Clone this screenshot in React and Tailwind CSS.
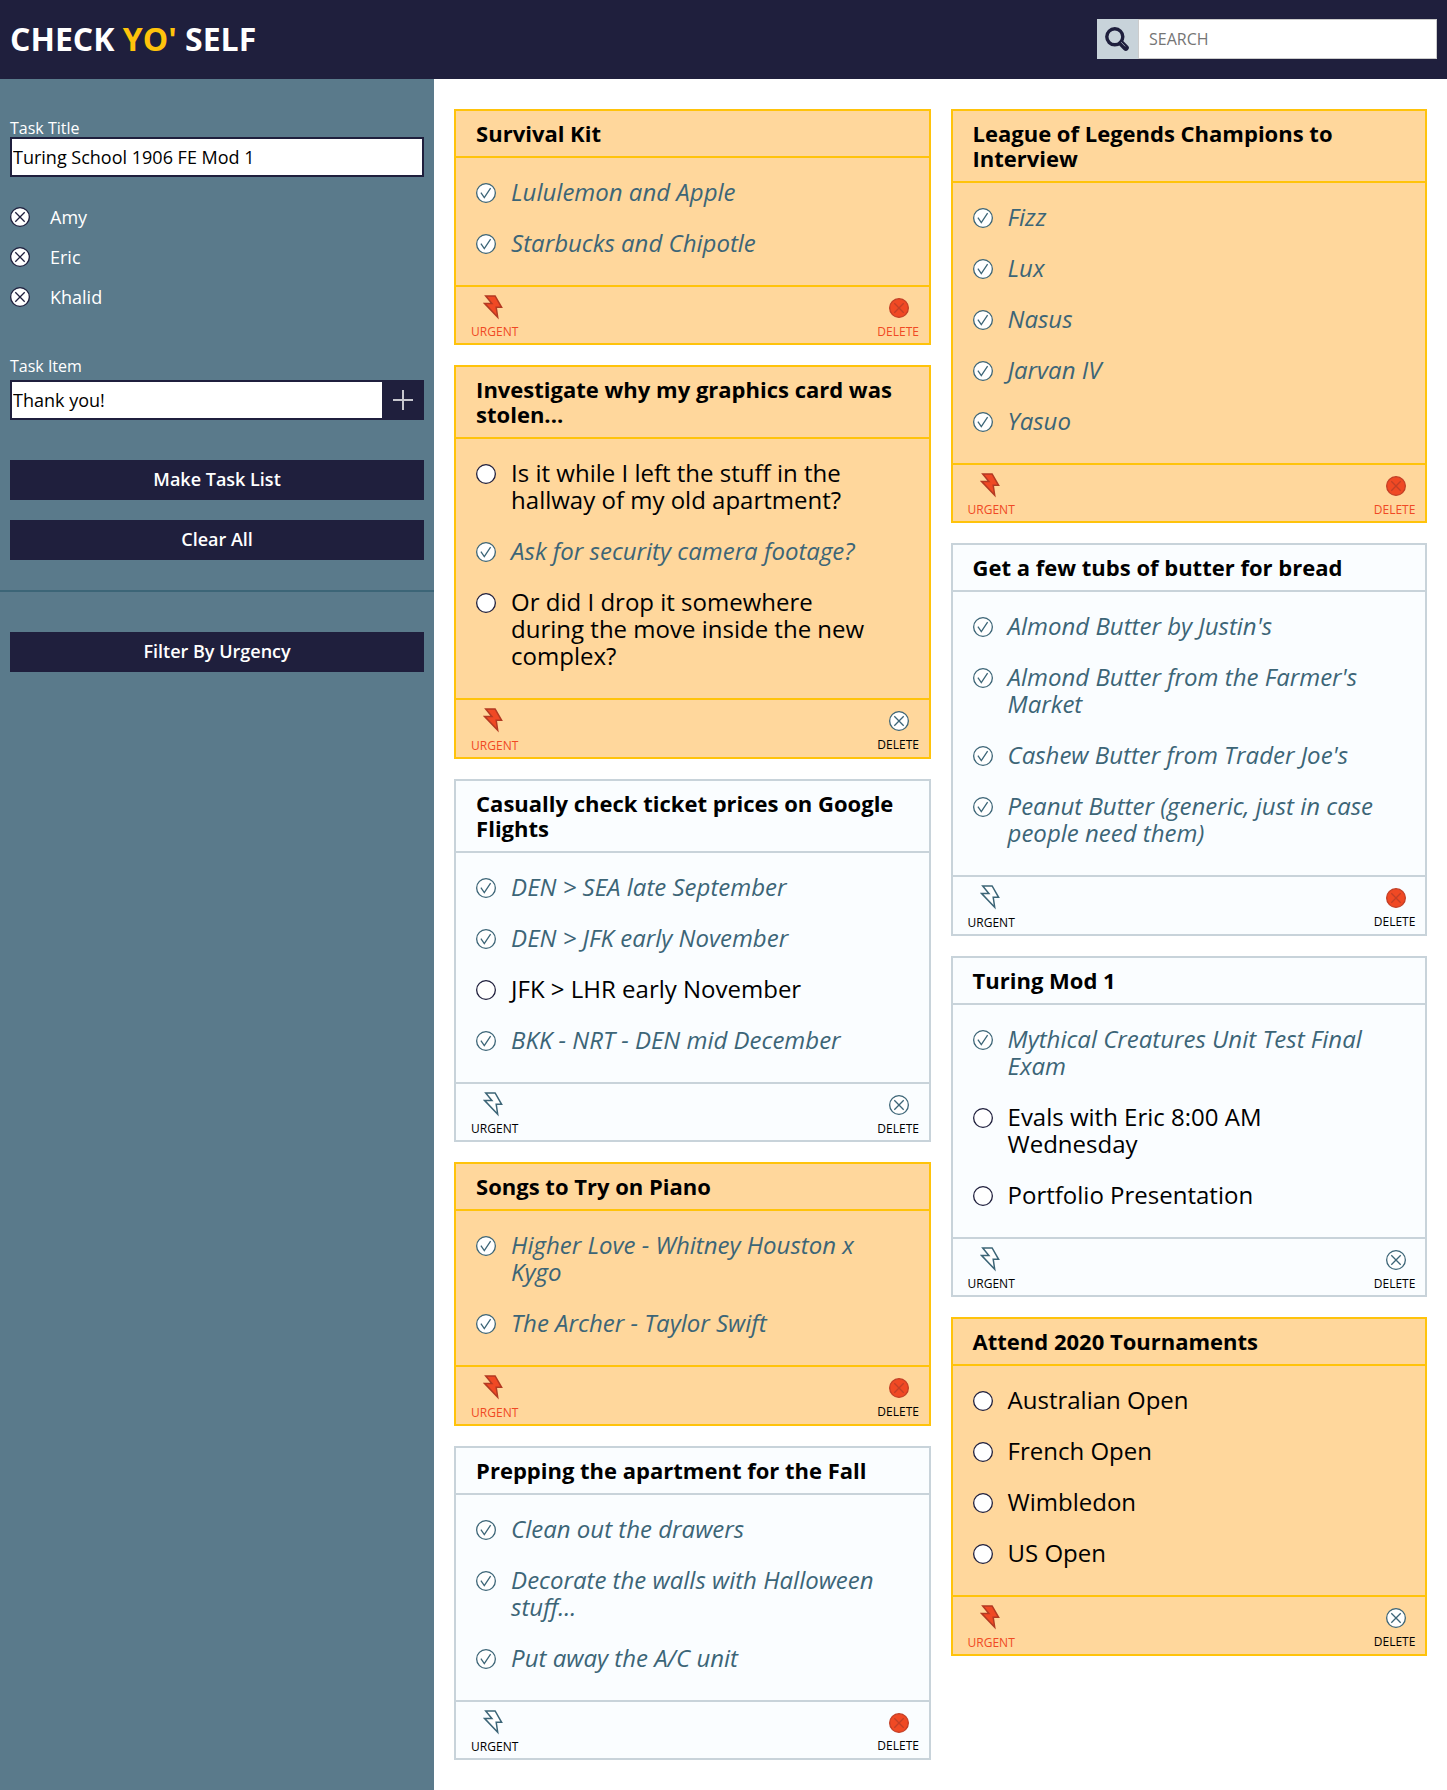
const cards = [
  [
    { title: "Survival Kit", urgent: true, del: "redtext", items: [[1, "Lululemon and Apple"], [1, "Starbucks and Chipotle"]] },
    {
      title: "Investigate why my graphics card was stolen...", urgent: true, del: "off",
      items: [
        [0, "Is it while I left the stuff in the hallway of my old apartment?"],
        [1, "Ask for security camera footage?"],
        [0, "Or did I drop it somewhere during the move inside the new complex?"],
      ],
    },
    {
      title: "Casually check ticket prices on Google Flights", urgent: false, del: "off",
      items: [
        [1, "DEN > SEA late September"],
        [1, "DEN > JFK early November"],
        [0, "JFK > LHR early November"],
        [1, "BKK - NRT - DEN mid December"],
      ],
    },
    { title: "Songs to Try on Piano", urgent: true, del: "red", items: [[1, "Higher Love - Whitney Houston x Kygo"], [1, "The Archer - Taylor Swift"]] },
    {
      title: "Prepping the apartment for the Fall", urgent: false, del: "red",
      items: [[1, "Clean out the drawers"], [1, "Decorate the walls with Halloween stuff..."], [1, "Put away the A/C unit"]],
    },
  ],
  [
    {
      title: "League of Legends Champions to Interview", urgent: true, del: "redtext",
      items: [[1, "Fizz"], [1, "Lux"], [1, "Nasus"], [1, "Jarvan IV"], [1, "Yasuo"]],
    },
    {
      title: "Get a few tubs of butter for bread", urgent: false, del: "red",
      items: [
        [1, "Almond Butter by Justin's"],
        [1, "Almond Butter from the Farmer's Market"],
        [1, "Cashew Butter from Trader Joe's"],
        [1, "Peanut Butter (generic, just in case people need them)"],
      ],
    },
    {
      title: "Turing Mod 1", urgent: false, del: "off",
      items: [[1, "Mythical Creatures Unit Test Final Exam"], [0, "Evals with Eric 8:00 AM Wednesday"], [0, "Portfolio Presentation"]],
    },
    { title: "Attend 2020 Tournaments", urgent: true, del: "off", items: [[0, "Australian Open"], [0, "French Open"], [0, "Wimbledon"], [0, "US Open"]] },
  ],
];

function Circle({ fill, stroke, children, className = "" }) {
  return (
    <svg viewBox="0 0 20 20" className={`block h-5 w-5 shrink-0 ${className}`} fill="none" stroke={stroke} strokeWidth="1.3">
      <circle cx="10" cy="10" r="9.35" fill={fill} />
      {children}
    </svg>
  );
}

const Cross = () => <path d="M5.3 5.3l9.4 9.4M14.7 5.3l-9.4 9.4" />;

function Bolt({ active }) {
  return (
    <svg viewBox="0 0 20 25" className="ml-3 block h-[25px] w-5" fill={active ? "#f04924" : "#ffffff"} stroke={active ? "#b33a22" : "#3c6577"} strokeWidth="1.5">
      <path d="M2.7 1h9.4l6.5 11.3h-5.4l1.5 9.9L1.7 8.6h7.2z" />
    </svg>
  );
}

function Card({ card }) {
  const edge = card.urgent ? "border-[#ffc30b]" : "border-[#c8d3da]";
  return (
    <article className={`border-2 ${edge} ${card.urgent ? "bg-[#ffd79c]" : "bg-[#fafdff]"}`}>
      <h2 className={`border-b-2 px-5 py-2.5 text-[22px] leading-[25px] font-bold ${edge}`}>{card.title}</h2>
      <ul className="flex flex-col gap-6 px-5 pt-5 pb-[29px]">
        {card.items.map(([done, text]) => (
          <li key={text} className={`flex gap-[15px] text-2xl leading-[27px] ${done ? "italic text-[#3c6577]" : ""}`}>
            {done ? (
              <Circle fill="#ffffff" stroke="#3c6577" className="mt-[5px]">
                <path d="M4.9 9.6l3.4 5L14.6 5.2" />
              </Circle>
            ) : (
              <Circle fill="#ffffff" stroke="#1f1f3d" className="mt-[5px]" />
            )}
            <span className="w-[370px]">{text}</span>
          </li>
        ))}
      </ul>
      <footer className={`box-content flex h-[56.45px] justify-between border-t-2 pr-[9.6px] pl-[15px] text-xs leading-4 ${edge}`}>
        <div className="pt-2">
          <Bolt active={card.urgent} />
          <p className={`mt-[4.2px] ${card.urgent ? "text-[#f04924]" : ""}`}>URGENT</p>
        </div>
        <div className="pt-[11px]">
          <Circle className="ml-3" fill={card.del === "off" ? "#ffffff" : "#f04924"} stroke={card.del === "off" ? "#3c6577" : "#c23f26"}>
            <Cross />
          </Circle>
          <p className={`mt-[5.7px] ${card.del === "redtext" ? "text-[#f04924]" : ""}`}>DELETE</p>
        </div>
      </footer>
    </article>
  );
}

function Button({ children, className = "" }) {
  return <button className={`block h-10 w-full bg-[#1f1f3d] pb-[3px] text-lg leading-6 font-semibold text-white ${className}`}>{children}</button>;
}

export default function App() {
  return (
    <div className="flex h-[1790px] flex-col bg-white font-['Open_Sans',sans-serif] text-black">
      <header className="flex h-[79px] shrink-0 items-center justify-between bg-[#1f1f3d] px-2.5">
        <h1 className="pb-px text-[32px] leading-10 font-bold text-white">
          CHECK <span className="text-[#ffc30b]">YO'</span> SELF
        </h1>
        <div className="mb-px flex h-10 w-[340px] bg-white">
          <div className="flex w-[41px] items-center bg-[#c8d3da] pl-2">
            <svg viewBox="0 0 24 24" className="h-6 w-6" fill="none" stroke="#1f1f3d">
              <circle cx="9.8" cy="9.8" r="8" strokeWidth="3.4" />
              <path d="M16.4 16.4l4.4 4.4" strokeWidth="6" strokeLinecap="round" />
              <path d="M16.2 15.2l4 4.2" stroke="#c8d3da" strokeWidth="0.7" />
            </svg>
          </div>
          <input className="min-w-0 flex-1 border border-[#cccccc] bg-white px-2.5 text-base outline-none placeholder:text-[#757575]" placeholder="SEARCH" />
        </div>
      </header>
      <div className="flex flex-1">
        <aside className="w-[30%] shrink-0 bg-[#5a7a8b]">
          <div className="px-2.5 pt-[39px] text-white">
            <p className="-mb-px text-base leading-5">Task Title</p>
            <input className="block h-10 w-full border-2 border-[#1f1f3d] bg-white px-px text-lg text-black outline-none" defaultValue="Turing School 1906 FE Mod 1" />
            <ul className="mt-[30px] flex flex-col gap-5">
              {["Amy", "Eric", "Khalid"].map((n) => (
                <li key={n} className="flex h-5 items-center gap-5 text-lg leading-5">
                  <Circle fill="#ffffff" stroke="#1f1f3d"><Cross /></Circle>
                  {n}
                </li>
              ))}
            </ul>
            <p className="mt-[49px] pb-1 text-base leading-5">Task Item</p>
            <div className="flex h-10 bg-[#1f1f3d]">
              <input className="min-w-0 flex-1 border-2 border-r-0 border-[#1f1f3d] bg-white px-px text-lg text-black outline-none" defaultValue="Thank you!" />
              <div className="flex w-[42px] items-center justify-center">
                <svg viewBox="0 0 20 20" className="h-5 w-5" stroke="#c7c7cf" strokeWidth="2"><path d="M10 0v20M0 10h20" /></svg>
              </div>
            </div>
            <Button className="mt-10">Make Task List</Button>
            <Button className="mt-5">Clear All</Button>
          </div>
          <div className="mt-[30px] border-t-2 border-[#3c6577] px-2.5 pt-10">
            <Button>Filter By Urgency</Button>
          </div>
        </aside>
        <main className="grid flex-1 grid-cols-2 gap-5 px-5 pt-[30px]">
          {cards.map((col, i) => (
            <div key={i} className="flex flex-col gap-5">
              {col.map((c) => <Card key={c.title} card={c} />)}
            </div>
          ))}
        </main>
      </div>
    </div>
  );
}
